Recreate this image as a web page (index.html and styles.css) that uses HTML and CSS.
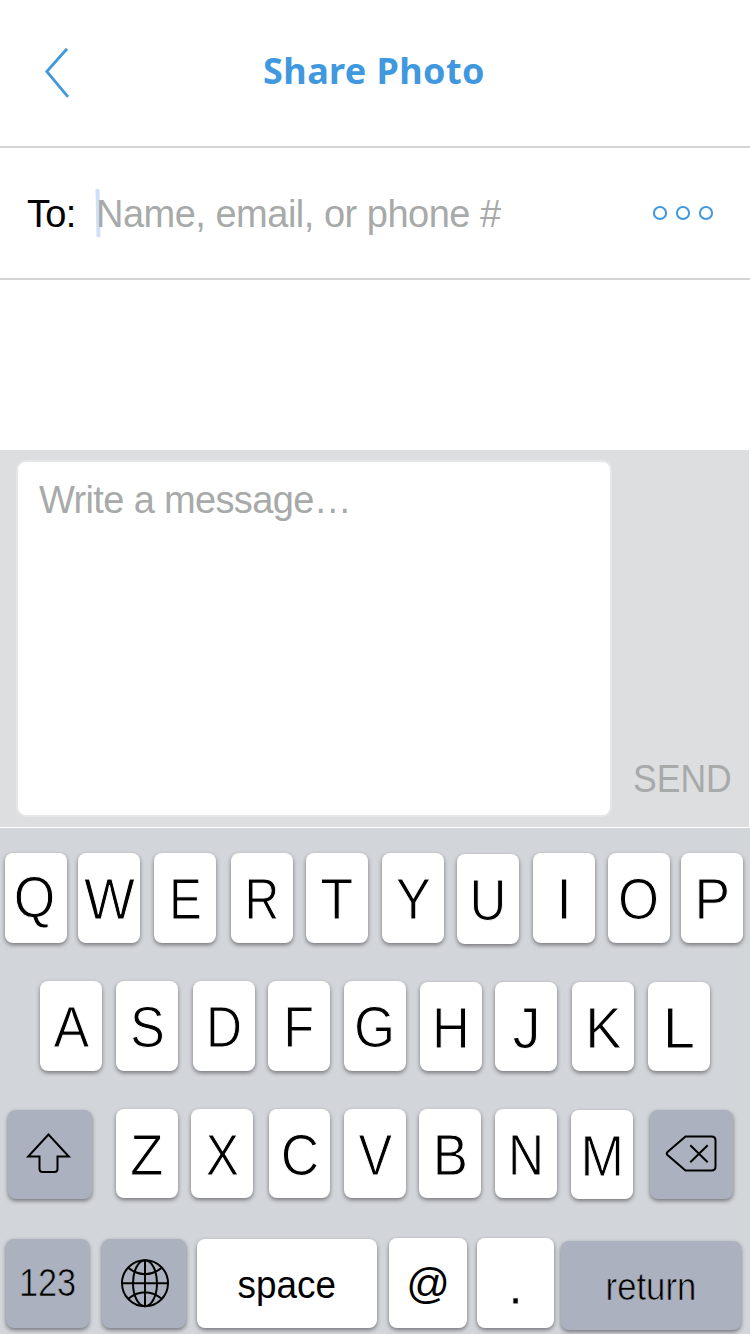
FILE: index.html
```html
<!DOCTYPE html>
<html lang="en">
<head>
<meta charset="utf-8">
<title>Share Photo</title>
<link rel="stylesheet" href="styles.css">
</head>
<body>
<div class="screen">
  <header class="header">
    <svg class="back" width="28" height="54" viewBox="0 0 28 54" fill="none"><path d="M24 2.700 3.800 25.500 25 50.800"/></svg>
    <h1 class="title"><span>Share Photo</span></h1>
  </header>
  <div class="recipient">
    <span class="to">To:</span>
    <svg class="caret" width="6" height="50" viewBox="0 0 6 50"><path d="M.5 1h4L5.500 49H1.500z"/></svg>
    <span class="placeholder name">Name, email, or phone #</span>
    <svg class="more" width="62" height="16" viewBox="0 0 62 16" fill="none"><circle cx="8" cy="8" r="6.100"/><circle cx="31" cy="8" r="6.100"/><circle cx="54" cy="8" r="6.100"/></svg>
  </div>
  <main class="thread"></main>
  <section class="composer">
    <div class="message"><span class="placeholder write">Write a message…</span></div>
    <span class="send">SEND</span>
  </section>
  <section class="keyboard">
    <div class="row row-top">
      <div class="key k-q"><span>Q</span></div>
      <div class="key k-w"><span>W</span></div>
      <div class="key k-e"><span>E</span></div>
      <div class="key k-r"><span>R</span></div>
      <div class="key k-t"><span>T</span></div>
      <div class="key k-y"><span>Y</span></div>
      <div class="key k-u"><span>U</span></div>
      <div class="key k-i"><span>I</span></div>
      <div class="key k-o"><span>O</span></div>
      <div class="key k-p"><span>P</span></div>
    </div>
    <div class="row row-home">
      <div class="key k-a"><span>A</span></div>
      <div class="key k-s"><span>S</span></div>
      <div class="key k-d"><span>D</span></div>
      <div class="key k-f"><span>F</span></div>
      <div class="key k-g"><span>G</span></div>
      <div class="key low k-h"><span>H</span></div>
      <div class="key low k-j"><span>J</span></div>
      <div class="key low k-k"><span>K</span></div>
      <div class="key low k-l"><span>L</span></div>
    </div>
    <div class="row row-bottom">
      <div class="key dark low shift"><svg width="50" height="46" viewBox="0 0 50 46" fill="none"><path d="M23.500 2.500 3.200 24.500H14.500V37Q14.500 40 17.500 40H29.500Q32.500 40 32.500 37V24.500H43.800Z"/></svg></div>
      <div class="key k-z"><span>Z</span></div>
      <div class="key k-x"><span>X</span></div>
      <div class="key k-c"><span>C</span></div>
      <div class="key k-v"><span>V</span></div>
      <div class="key k-b"><span>B</span></div>
      <div class="key k-n"><span>N</span></div>
      <div class="key low k-m"><span>M</span></div>
      <div class="key dark low delete"><svg width="54" height="42" viewBox="0 0 54 42" fill="none"><path d="M20.500 2.500H46.500Q50.500 2.500 50.500 6.500V32.500Q50.500 36.500 46.500 36.500H20.500L2.500 21Q1 19.500 2.500 18ZM25.300 11.300 42.700 28.300M42.700 11.300 25.300 28.300"/></svg></div>
    </div>
    <div class="row row-space">
      <div class="key dark numbers"><span>123</span></div>
      <div class="key dark globe"><svg width="52" height="52" viewBox="0 0 52 52" fill="none"><circle cx="27" cy="25.200" r="23"/><ellipse cx="27" cy="25.200" rx="12" ry="23"/><path d="M27 2.200V48.200M4 25.200H50M10.500 10Q27 22.500 43.500 10M10.500 40.500Q27 28 43.500 40.500"/></svg></div>
      <div class="key space"><span>space</span></div>
      <div class="key at"><span>@</span></div>
      <div class="key dot"><span>.</span></div>
      <div class="key dark return"><span>return</span></div>
    </div>
  </section>
</div>
</body>
</html>
```
FILE: styles.css
```css
* { box-sizing: border-box; }
body {
  margin: 0;
  background: #fff;
  font-family: "Liberation Sans", Arial, sans-serif;
}
.screen {
  width: 750px;
  height: 1334px;
  display: flex;
  flex-direction: column;
  overflow: hidden;
  background: #fff;
}
.screen svg { display: block; flex: none; }

/* Header */
.header {
  height: 148px;
  flex: none;
  display: grid;
  grid-template-columns: 98px 1fr 100px;
  align-items: center;
  border-bottom: 2px solid #d4d4d4;
}
.back { margin-left: 43px; stroke: #4099df; stroke-width: 2.8; }
.title {
  margin: 0 0 4px;
  text-align: center;
  font: 700 36px/50px "Noto Sans", "Open Sans", sans-serif;
  letter-spacing: 0.4px;
  color: #4099df;
}

/* Recipient */
.recipient {
  height: 132px;
  flex: none;
  display: flex;
  align-items: center;
  border-bottom: 2px solid #d4d4d4;
  font-size: 38px;
  line-height: 44px;
  white-space: nowrap;
}
.to { width: 95px; padding: 2px 0 0 27px; letter-spacing: -0.7px; }
.caret { fill: #cfe0fb; }
.placeholder { color: #a7aaa9; }
.name { width: 556px; margin-left: -5px; padding-top: 2px; letter-spacing: -0.5px; }
.more { stroke: #4099df; stroke-width: 2; }
.thread { height: 170px; flex: none; }

/* Composer */
.composer {
  width: 749px;
  height: 377px;
  flex: none;
  display: flex;
  align-items: flex-end;
  padding: 0 0 10px 16px;
  background: #dddee0;
}
.message {
  width: 596px;
  height: 357px;
  padding: 16px 21px;
  border: 2px solid #e6e7e7;
  border-radius: 10px;
  background: #fff;
  font-size: 38px;
  line-height: 44px;
  letter-spacing: -0.65px;
}
.send {
  margin: 0 0 16px 21px;
  font-size: 38px;
  line-height: 44px;
  color: #a7aaa9;
  transform: scaleX(0.935);
  transform-origin: 0 50%;
}

/* Keyboard */
.keyboard {
  height: 507px;
  flex: none;
  display: flex;
  flex-direction: column;
  padding-top: 25px;
  border-top: 1px solid #fff;
  background: #d2d5da;
}
.row { display: flex; flex: none; align-items: flex-start; height: 128px; }
.row-space { height: 96px; padding-top: 1px; }
.key {
  width: 62px;
  height: 90px;
  flex: none;
  display: flex;
  justify-content: center;
  align-items: center;
  border-radius: 8px;
  background: #fff;
  box-shadow: 0 2px 4px rgba(0, 0, 0, 0.45);
  font-size: 58px;
  line-height: 66px;
  color: #000;
}
.key span {
  transform: translateY(1px) scaleX(var(--sx, 1));
  -webkit-text-stroke: 1px #fff;
}
.key svg { stroke: #000; stroke-width: 2; }
.dark { background: #abb1be; }
.key.dark span { -webkit-text-stroke: 0.7px #abb1be; }
.low { height: 89px; margin-top: 1px; }

.k-q { margin-left: 5px; }
.k-q span { transform: translate(-1px, -1px) scaleX(0.92); }
.k-w { margin-left: 11px; --sx: 0.93; }
.k-e { margin-left: 14px; --sx: 0.85; }
.k-r { margin-left: 15px; --sx: 0.83; }
.k-t { margin-left: 13px; --sx: 0.93; }
.k-y { margin-left: 14px; --sx: 0.91; }
.k-u { margin-left: 13px; margin-top: 1px; --sx: 0.88; }
.k-i { margin-left: 14px; }
.k-o { margin-left: 13px; --sx: 0.91; }
.k-p { margin-left: 11px; --sx: 0.92; }

.k-a { margin-left: 40px; --sx: 0.925; }
.k-s { margin-left: 14px; --sx: 0.9; }
.k-d { margin-left: 15px; --sx: 0.86; }
.k-f { margin-left: 13px; --sx: 0.86; }
.k-g { margin-left: 14px; --sx: 0.91; }
.k-h { margin-left: 14px; --sx: 0.9; }
.k-j { margin-left: 13px; --sx: 0.97; }
.k-k { margin-left: 15px; --sx: 0.94; }
.k-l { margin-left: 14px; }

.row-bottom .key { height: 89px; }
.row-bottom { height: 129px; }
.shift { width: 84px; margin-left: 8px; }
.k-z { margin-left: 24px; --sx: 0.945; }
.k-x { margin-left: 13px; --sx: 0.86; }
.k-c { width: 61px; margin-left: 16px; --sx: 0.92; }
.k-v { margin-left: 14px; --sx: 0.87; }
.k-b { margin-left: 13px; --sx: 0.91; }
.k-n { margin-left: 14px; --sx: 0.86; }
.k-m { margin-left: 14px; --sx: 0.9; }
.delete { width: 83px; margin-left: 17px; }

.row-space .key { height: 89px; margin-top: 0; }
.row-space .numbers { width: 83px; margin-left: 6px; font-size: 39px; --sx: 0.88; }
.row-space .numbers span { transform: translateY(-1px) scaleX(0.88); }
.row-space .globe { width: 84px; margin-left: 13px; }
.row-space .space { width: 180px; margin-left: 11px; font-size: 38px; --sx: 0.97; }
.row-space .space span { -webkit-text-stroke-width: 0; }
.row-space .at { width: 78px; height: 90px; margin: -1px 0 0 12px; font-size: 43px; }
.row-space .at span { transform: none; -webkit-text-stroke-width: 0; }
.row-space .dot { width: 77px; height: 90px; margin: -1px 0 0 10px; }
.row-space .return { width: 180px; margin: 2px 0 0 7px; font-size: 39px; --sx: 0.89; }
```
